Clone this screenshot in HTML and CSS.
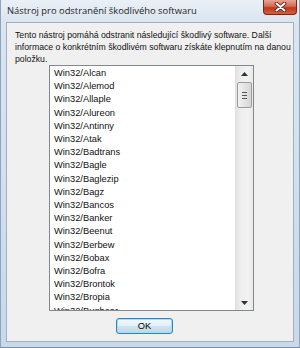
FILE: index.html
```html
<!DOCTYPE html>
<html lang="cs">
<head>
<meta charset="utf-8">
<link rel="stylesheet" href="styles.css">
</head>
<body>
<div class="window">
  <div class="titlebar">
    <span class="title">Nástroj pro odstranění škodlivého softwaru</span>
    <div class="close">
      <svg width="13" height="10" viewBox="0 0 13 10"><path d="M2.5 1.5 L10.5 8.5 M10.5 1.5 L2.5 8.5" stroke="#4a1a14" stroke-width="3.6" stroke-linecap="round"/><path d="M2.5 1.5 L10.5 8.5 M10.5 1.5 L2.5 8.5" stroke="#fff" stroke-width="2" stroke-linecap="round"/></svg>
    </div>
  </div>
  <div class="client">
    <p class="desc">Tento nástroj pomáhá odstranit následující škodlivý software. Další informace o konkrétním škodlivém softwaru získáte klepnutím na danou položku.</p>
    <div class="listbox">
      <ul class="items">
        <li>Win32/Alcan</li>
        <li>Win32/Alemod</li>
        <li>Win32/Allaple</li>
        <li>Win32/Alureon</li>
        <li>Win32/Antinny</li>
        <li>Win32/Atak</li>
        <li>Win32/Badtrans</li>
        <li>Win32/Bagle</li>
        <li>Win32/Baglezip</li>
        <li>Win32/Bagz</li>
        <li>Win32/Bancos</li>
        <li>Win32/Banker</li>
        <li>Win32/Beenut</li>
        <li>Win32/Berbew</li>
        <li>Win32/Bobax</li>
        <li>Win32/Bofra</li>
        <li>Win32/Brontok</li>
        <li>Win32/Bropia</li>
        <li>Win32/Bugbear</li>
      </ul>
      <div class="scrollbar">
        <div class="arrow"><svg width="7" height="4" viewBox="0 0 7 4"><path d="M0 4 L3.5 0 L7 4Z" fill="#333"/></svg></div>
        <div class="track">
          <div class="thumb"><span class="grip"></span><span class="grip"></span><span class="grip"></span></div>
        </div>
        <div class="arrow"><svg width="7" height="4" viewBox="0 0 7 4"><path d="M0 0 L3.5 4 L7 0Z" fill="#333"/></svg></div>
      </div>
    </div>
    <div class="footer">
      <button class="ok">OK</button>
    </div>
  </div>
</div>
</body>
</html>
```

FILE: styles.css
```css
html, body {
  margin: 0;
  padding: 0;
}
body {
  width: 300px;
  height: 348px;
  overflow: hidden;
  background: #c9d9ea;
}
.window {
  width: 300px;
  height: 348px;
  box-sizing: border-box;
  display: flex;
  flex-direction: column;
  background: linear-gradient(to bottom, #e9f0f7 0px, #dbe5f0 22px, #c8d9eb 100%);
  border-left: 1px solid #8ea3bd;
  border-right: 1px solid #8ea3bd;
  border-bottom: 1px solid #7a8ea8;
}
.titlebar {
  height: 22px;
  flex: none;
  display: flex;
  align-items: flex-start;
  padding-left: 6px;
}
.title {
  font-family: "Open Sans", "DejaVu Sans", sans-serif;
  font-size: 9.4px;
  color: #1e1e1e;
  line-height: 22px;
}
.close {
  margin-left: auto;
  margin-right: 2px;
  width: 34px;
  height: 15px;
  box-sizing: border-box;
  border: 1px solid #6b2b22;
  border-top: none;
  border-radius: 0 0 4px 4px;
  background: linear-gradient(to bottom, #e8a493 0%, #d56a4f 45%, #c0391b 55%, #d2603f 100%);
  display: flex;
  align-items: center;
  justify-content: center;
}
.client {
  flex: 1;
  margin: 0 5px 5px 5px;
  background: #f0f0f0;
  border: 1px solid #a1afc1;
  box-sizing: border-box;
  display: flex;
  flex-direction: column;
}
.desc {
  margin: 0;
  padding: 6px 1px 0 8px;
  height: 42px;
  box-sizing: border-box;
  font-family: "Liberation Sans", Arial, sans-serif;
  font-size: 8.7px;
  line-height: 12px;
  color: #111;
}
.listbox {
  margin: 0 0 0 42px;
  width: 205px;
  height: 246px;
  box-sizing: border-box;
  border: 1px solid #828790;
  background: #fff;
  display: flex;
}
.items {
  list-style: none;
  margin: 0;
  padding: 1px 0 0 4px;
  flex: 1;
  overflow: hidden;
  font-family: "Liberation Sans", Arial, sans-serif;
  font-size: 9.3px;
  line-height: 13.2px;
  color: #111;
}
.scrollbar {
  width: 17px;
  flex: none;
  display: flex;
  flex-direction: column;
  background: linear-gradient(to right, #e3e3e3, #eeeeee 30%, #f2f2f2 70%, #e8e8e8);
  border-left: 1px solid #e0e0e0;
}
.arrow {
  height: 15px;
  display: flex;
  align-items: center;
  justify-content: center;
}
.track {
  flex: 1;
}
.thumb {
  margin: 1px 1px 0 1px;
  height: 26px;
  box-sizing: border-box;
  border: 1px solid #9b9b9b;
  border-radius: 2px;
  background: linear-gradient(to right, #f2f2f2, #e4e4e4 50%, #d6d6d6);
  display: flex;
  flex-direction: column;
  align-items: center;
  justify-content: center;
  gap: 2px;
}
.grip {
  width: 5px;
  height: 1px;
  background: #555;
}
.footer {
  display: flex;
  justify-content: center;
  padding-top: 7px;
  padding-right: 11px;
}
.ok {
  width: 57px;
  height: 16px;
  box-sizing: border-box;
  border: 1px solid #3c7fb1;
  border-radius: 3px;
  background: linear-gradient(to bottom, #f2f8fc 0%, #e4eff7 50%, #cfe3f1 51%, #bcd8ec 100%);
  box-shadow: inset 0 0 0 1px #9fe0fa;
  font-family: "Liberation Sans", Arial, sans-serif;
  font-size: 9.3px;
  color: #000;
  padding: 0;
  line-height: 14px;
}
```
